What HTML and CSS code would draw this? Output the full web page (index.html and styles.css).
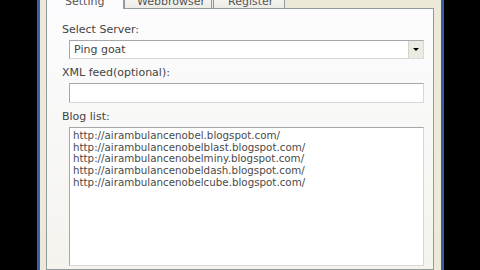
FILE: index.html
```html
<!DOCTYPE html>
<html lang="en">
<head>
  <meta charset="UTF-8" />
  <title>Blog Pinger</title>
  <link rel="stylesheet" href="styles.css">
</head>
<body>

  <div class="window">
    <div class="tabs">
      <div class="tab active">Setting</div>
      <div class="tab web">Webbrowser</div>
      <div class="tab reg">Register</div>
    </div>

    <div class="panel">
      <label class="field-label">Select Server:</label>
      <div class="combo">
        <span class="combo-value">Ping goat</span>
        <span class="combo-btn"><span class="arrow"></span></span>
      </div>

      <label class="field-label">XML feed(optional):</label>
      <div class="textbox"></div>

      <label class="field-label">Blog list:</label>
      <div class="listbox">
        <div>http://airambulancenobel.blogspot.com/</div>
        <div>http://airambulancenobelblast.blogspot.com/</div>
        <div>http://airambulancenobelminy.blogspot.com/</div>
        <div>http://airambulancenobeldash.blogspot.com/</div>
        <div>http://airambulancenobelcube.blogspot.com/</div>
      </div>
    </div>
  </div>

</body>
</html>
```

FILE: styles.css
```css
* { box-sizing: border-box; }

html, body {
  margin: 0;
  padding: 0;
  height: 270px;
  overflow: hidden;
  background: #000;
  font-family: "DejaVu Sans", Verdana, sans-serif;
  font-size: 10px;
  color: #3c3c3c;
}

.window {
  margin-left: 37px;
  width: 407px;
  height: 270px;
  overflow: hidden;
  background: #ece9d8;
  border-left: 3px solid #3b5fa6;
  border-right: 3px solid #3b5fa6;
  padding: 0 7px 0 6px;
}

/* TABS */
.tabs {
  display: flex;
  height: 8px;
  align-items: flex-end;
  position: relative;
  z-index: 1;
}

.tab {
  flex: none;
  height: 20px;
  padding-top: 6px;
  border: 1px solid #919b9c;
  border-bottom: none;
  border-radius: 3px 3px 0 0;
  background: linear-gradient(#ffffff, #ecebe5);
  font-size: 11px;
  line-height: 14px;
  color: #555;
  white-space: nowrap;
  overflow: hidden;
}

.tab.active {
  width: 78px;
  padding-left: 18px;
  background: #fcfcfe;
  height: 21px;
  margin-bottom: -1px;
}

.tab.web {
  width: 88px;
  padding-left: 12px;
  margin-right: 1px;
}

.tab.reg {
  width: 72px;
  padding-left: 14px;
}

/* PANEL */
.panel {
  height: 262px;
  border: 1px solid #919b9c;
  background: linear-gradient(#fcfcfe, #f4f3ee);
  padding: 14px 9px 0 15px;
  display: flex;
  flex-direction: column;
}

.field-label {
  font-size: 11px;
  line-height: 14px;
  color: #444;
  margin-bottom: 3px;
}

.combo,
.textbox,
.listbox {
  flex: none;
  margin-left: 7px;
  background: #fff;
  border: 1px solid #a7a6aa;
  border-right-color: #d8d8d8;
  border-bottom-color: #d8d8d8;
}

.combo {
  height: 19px;
  display: flex;
  align-items: center;
  margin-bottom: 7px;
}

.combo-value {
  flex: 1;
  padding-left: 4px;
  font-size: 11px;
  color: #444;
}

.combo-btn {
  width: 15px;
  height: 17px;
  background: #ecebe2;
  border-left: 1px solid #d4d3c8;
  display: flex;
  align-items: center;
  justify-content: center;
}

.arrow {
  width: 0;
  height: 0;
  border-left: 3px solid transparent;
  border-right: 3px solid transparent;
  border-top: 3px solid #000;
}

.textbox {
  height: 20px;
  margin-bottom: 7px;
}

.listbox {
  height: 139px;
  padding: 2px 3px;
  font-size: 10.3px;
  line-height: 11.7px;
  color: #4a4a4a;
}
```
